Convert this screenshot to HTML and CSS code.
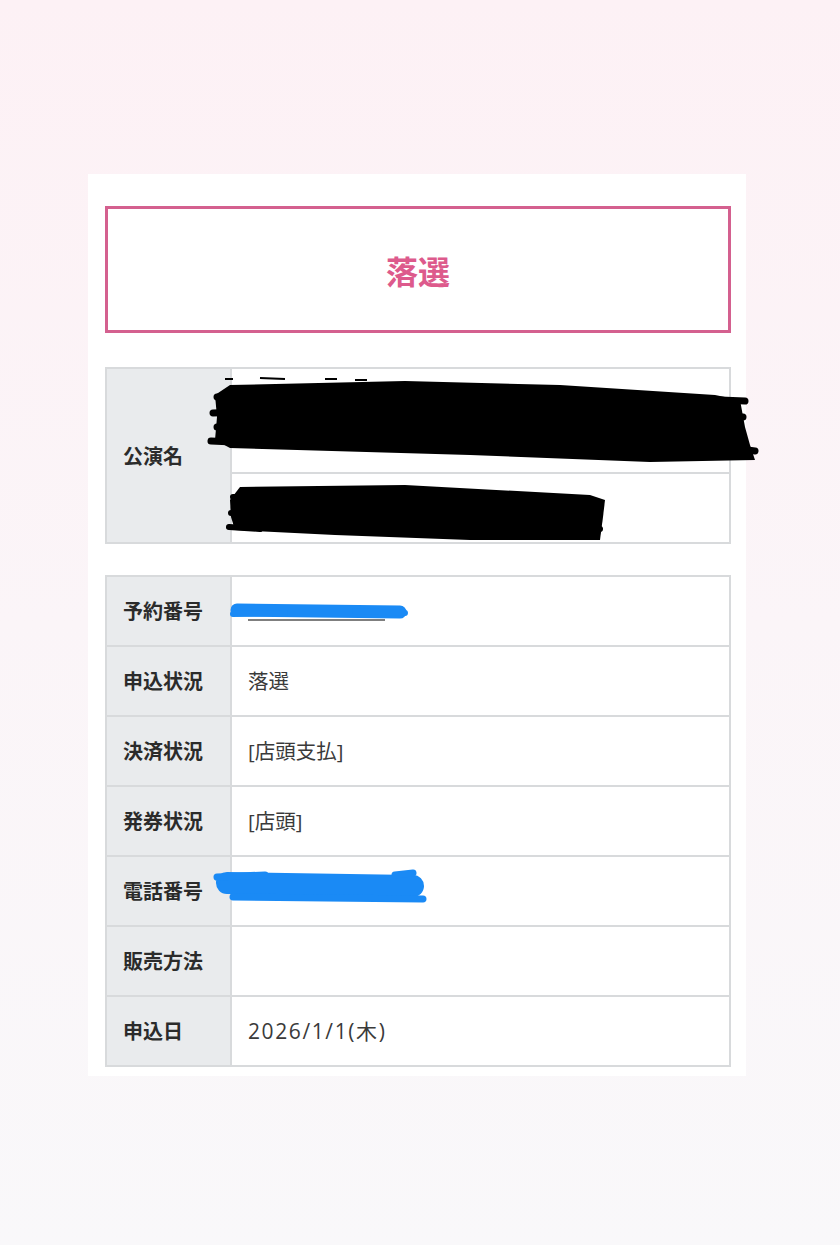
FILE: index.html
```html
<!DOCTYPE html>
<html lang="ja">
  <head>
    <meta charset="UTF-8" />
    <meta name="viewport" content="width=device-width, initial-scale=1.0" />
    <title>申込詳細</title>
    <link rel="stylesheet" href="styles.css">
  </head>
  <body>
    <div class="card">
      <div class="result">落選</div>

      <div class="table-wrap">
        <table class="detail detail-title">
          <tr class="row-tall">
            <th rowspan="2">公演名</th>
            <td></td>
          </tr>
          <tr>
            <td></td>
          </tr>
        </table>
        <!-- 黒塗り -->
        <svg class="redact" width="660" height="180" viewBox="0 0 660 180">
          <polygon fill="#000" points="125,18 300,14 455,18 610,28 635,33 640,60 645,78 650,93 545,95 365,88 125,81 110,73 112,50 110,28" />
          <path d="M112 30 L200 28 M108 46 L170 44 M112 60 L160 60 M106 74 L150 76 M590 32 L640 34 M600 48 L638 50 M610 64 L636 66 M620 80 L650 84" stroke="#000" stroke-width="7" stroke-linecap="round" />
          <path d="M120 12 L128 12 M155 11 L180 12 M220 12 L232 12 M250 13 L262 13" stroke="#000" stroke-width="2" />
          <polygon fill="#000" points="135,120 300,118 485,128 500,133 498,150 495,173 365,173 230,168 130,163 126,150 125,133" />
          <path d="M128 130 L160 130 M126 146 L150 146 M124 160 L155 162 M480 140 L496 140 M470 160 L495 162" stroke="#000" stroke-width="6" stroke-linecap="round" />
        </svg>
      </div>

      <div class="table-wrap">
        <table class="detail">
          <tr><th>予約番号</th><td></td></tr>
          <tr><th>申込状況</th><td>落選</td></tr>
          <tr><th>決済状況</th><td>[店頭支払]</td></tr>
          <tr><th>発券状況</th><td>[店頭]</td></tr>
          <tr><th>電話番号</th><td></td></tr>
          <tr><th>販売方法</th><td></td></tr>
          <tr><th>申込日</th><td class="date">2026/1/1(木)</td></tr>
        </table>
        <!-- 青塗り -->
        <svg class="redact" width="660" height="500" viewBox="0 0 660 500">
          <path d="M143 45 L280 45" stroke="#555" stroke-width="1.5" />
          <path d="M132 35 L295 37" stroke="#1a8af5" stroke-width="13" stroke-linecap="round" />
          <path d="M128 39 L180 38 M250 36 L300 38" stroke="#1a8af5" stroke-width="6" stroke-linecap="round" />
          <path d="M122 308 L308 311" stroke="#1a8af5" stroke-width="22" stroke-linecap="round" />
          <path d="M128 322 L318 324 M112 302 L160 300 M290 300 L308 298" stroke="#1a8af5" stroke-width="7" stroke-linecap="round" />
        </svg>
      </div>
    </div>
  </body>
</html>
```

FILE: styles.css
```css
:root {
  --pink: #d4608f;
  --pink-text: #dd5a8c;
  --line: #d8dadc;
  --label-bg: #e9ebed;
  --text: #333;
}

body {
  margin: 0;
  min-height: 1245px;
  font-family: "Noto Sans CJK JP", "Noto Sans", sans-serif;
  color: var(--text);
  background: linear-gradient(to bottom, #fdf1f5 0%, #fbf5f8 50%, #f9f8fa 100%);
}

.card {
  box-sizing: border-box;
  width: 658px;
  margin-left: 88px;
  padding: 32px 15px 9px 17px;
  position: relative;
  top: 174px;
  background-color: #fff;
}

.result {
  box-sizing: border-box;
  height: 127px;
  border: 3px solid var(--pink);
  display: flex;
  justify-content: center;
  align-items: center;
  font-size: 32px;
  font-weight: 700;
  color: var(--pink-text);
}

.table-wrap {
  position: relative;
  margin-top: 34px;
}

.table-wrap + .table-wrap {
  margin-top: 31px;
}

.detail {
  width: 100%;
  border-collapse: collapse;
  border: 2px solid var(--line);
}

.detail th,
.detail td {
  border: 2px solid var(--line);
  height: 68px;
  padding: 0 16px;
  font-size: 20px;
  text-align: left;
  line-height: 1;
}

.detail th {
  width: 91px;
  padding-right: 16px;
  background-color: var(--label-bg);
  font-weight: 700;
  color: #2b2b2b;
}

.detail td {
  font-family: "Open Sans", "Noto Sans CJK JP", sans-serif;
  font-size: 20.5px;
  font-weight: 400;
  color: #3a3a3a;
}

.detail td.date {
  font-size: 21px;
  letter-spacing: 1.6px;
}

.detail-title .row-tall td {
  height: 103px;
}

.redact {
  position: absolute;
  left: 0;
  top: 0;
  overflow: visible;
  pointer-events: none;
}
```
